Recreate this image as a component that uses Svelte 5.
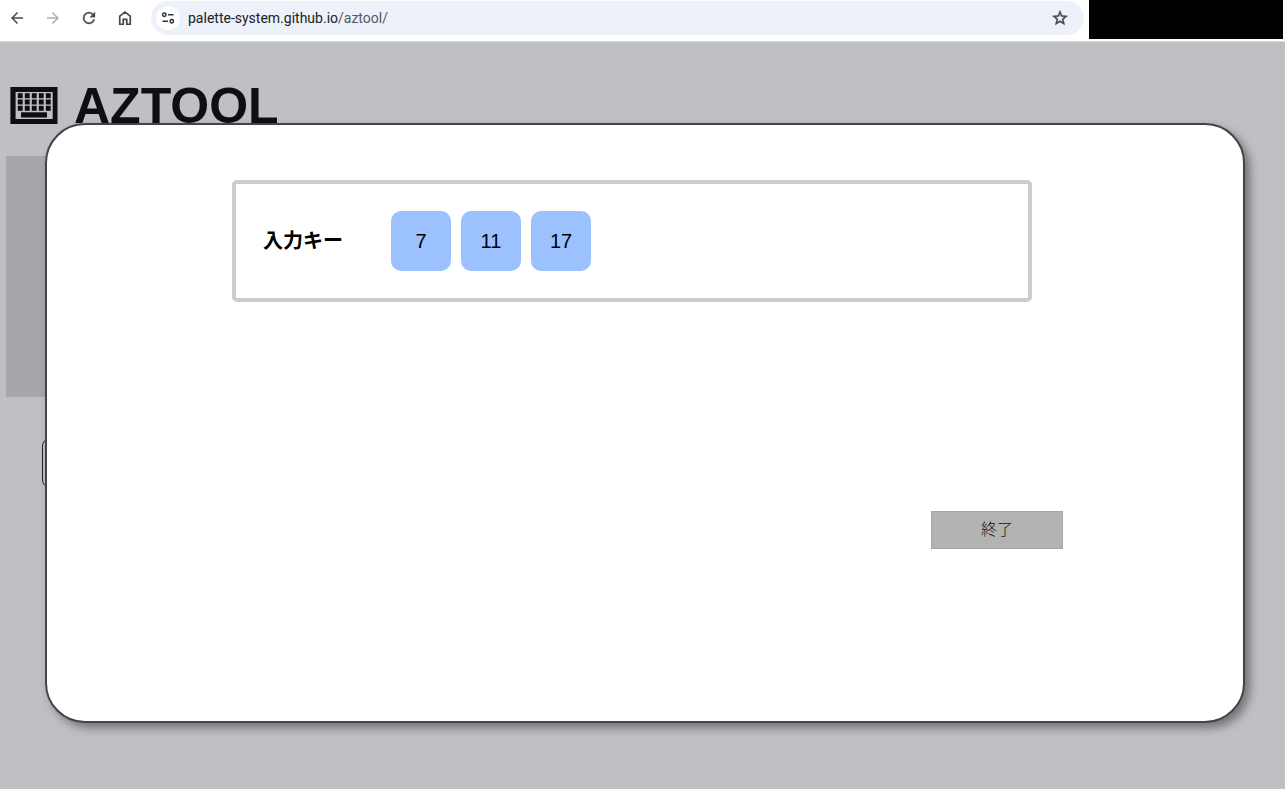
<script>
  const keys = [7, 11, 17];
  const keyColumns = [7.8, 14.8, 21.8, 28.8, 35.8];
  const keyRows = [6.2, 12.5, 18.8];
</script>

<div class="window">
  <header class="toolbar">
    <nav class="nav" aria-label="Browser">
      <button aria-label="Back">
        <svg width="18" height="18" viewBox="0 0 24 24" fill="#46484a"><path d="M20 11H7.830l5.590-5.590L12 4l-8 8 8 8 1.410-1.410L7.830 13H20v-2z" /></svg>
      </button>
      <button aria-label="Forward" disabled>
        <svg width="18" height="18" viewBox="0 0 24 24" fill="#adafb1"><path d="M12 4l-1.410 1.410L16.170 11H4v2h12.170l-5.580 5.590L12 20l8-8z" /></svg>
      </button>
      <button aria-label="Reload">
        <svg width="18" height="18" viewBox="0 0 24 24" fill="#46484a" stroke="#46484a" stroke-width="0.4"><path d="M17.650 6.350A7.960 7.960 0 0 0 12 4a8 8 0 1 0 7.730 10h-2.080A6 6 0 1 1 12 6c1.660 0 3.140.690 4.220 1.780L13 11h7V4l-2.350 2.350z" /></svg>
      </button>
      <button aria-label="Home">
        <svg width="18" height="18" viewBox="0 0 18 18" fill="none" stroke="#46484a" stroke-width="1.7"><path d="M3.750 7.100 9 3.100l5.250 4v8.150h-3.500v-4.900h-3.500v4.900h-3.500z" /></svg>
      </button>
    </nav>
    <div class="address">
      <button class="site" aria-label="Site information">
        <svg width="16" height="16" viewBox="0 0 16 16" fill="none" stroke="#303336" stroke-width="1.500"><circle cx="4.300" cy="4.700" r="1.700" /><path d="M8 4.700h5.500M2.500 11.300H8" /><circle cx="11.800" cy="11.300" r="1.700" /></svg>
      </button>
      <span class="url">palette-system.github.io<span class="path">/aztool/</span></span>
      <button class="star" aria-label="Bookmark">
        <svg width="18" height="18" viewBox="0 0 24 24" fill="#46484a" stroke="#46484a" stroke-width="0.700"><path d="M22 9.240l-7.190-.620L12 2 9.190 8.630 2 9.240l5.460 4.730L5.820 21 12 17.270 18.180 21l-1.630-7.030L22 9.240zM12 15.400l-3.760 2.270 1-4.280-3.320-2.880 4.380-.380L12 6.100l1.710 4.040 4.380.380-3.320 2.880 1 4.280L12 15.400z" /></svg>
      </button>
    </div>
    <div class="mask"></div>
  </header>

  <main class="page">
    <h1>
      <svg width="48" height="38" viewBox="0 0 48 38" aria-hidden="true">
        <path fill="#0d0f14" fill-rule="evenodd" d="M.4 0h47.100v37H.4zM5.600 5v27h37.100V5z" />
        <g fill="#0d0f14">
          {#each keyRows as y}
            {#each keyColumns as x}
              <rect {x} {y} width="4.900" height="5" />
            {/each}
          {/each}
          <rect x="11" y="25.300" width="26" height="5.200" />
        </g>
      </svg>
      <span>AZTOOL</span>
    </h1>
    <div class="panel"></div>
    <div class="frame"></div>

    <div class="modal" role="dialog" aria-label="入力キー">
      <section class="inputs">
        <h2>入力キー</h2>
        <ul>
          {#each keys as key}
            <li>{key}</li>
          {/each}
        </ul>
      </section>
      <div class="actions">
        <button class="finish">終了</button>
      </div>
    </div>
  </main>
</div>

<style>
  :global(body) {
    margin: 0;
  }

  .window {
    display: flex;
    flex-direction: column;
    min-height: 100vh;
    font-family: "Liberation Sans", "Noto Sans CJK JP", sans-serif;
    color: #000;
  }

  button {
    display: flex;
    align-items: center;
    justify-content: center;
    padding: 0;
    border: 0;
    background: none;
  }

  .toolbar {
    display: flex;
    align-items: flex-start;
    height: 42px;
    border-bottom: 1px solid #d8d9dc;
    background: #fff;
    box-sizing: border-box;
    padding-right: 2px;
  }

  .nav {
    display: flex;
    gap: 8px;
    padding: 4px 12px 0 3px;
  }

  .nav button {
    width: 28px;
    height: 28px;
  }

  .address {
    display: flex;
    flex: 1;
    align-items: center;
    height: 34px;
    margin-top: 1px;
    padding: 0 15px 0 5px;
    border-radius: 17px;
    background: #ecf1fa;
    box-sizing: border-box;
  }

  .site {
    width: 24px;
    height: 24px;
    border-radius: 12px;
    background: #fff;
  }

  .url {
    flex: 1;
    margin-left: 8px;
    font: 14px/20px Roboto, "Open Sans", sans-serif;
    color: #202124;
  }

  .path {
    color: #55585c;
  }

  .mask {
    width: 194px;
    height: 39px;
    margin-left: 5px;
    background: #000;
  }

  .page {
    position: relative;
    flex: 1;
    background: #bfc0c4;
    padding: 34px 6px 0;
  }

  h1 {
    display: flex;
    align-items: center;
    gap: 16px;
    margin: 0;
    padding: 0 4px;
    font-size: 50px;
    line-height: 60px;
    color: #0d0f14;
  }

  .panel {
    height: 241px;
    margin: 20px 60px 0 0;
    background: #a6a7aa;
  }

  .frame {
    height: 50px;
    margin: 41px 60px 0 36px;
    border: 1px solid #22242a;
    border-radius: 8px;
    box-sizing: border-box;
  }

  .modal {
    position: absolute;
    inset: 81px 40px 66px 45px;
    display: flex;
    flex-direction: column;
    align-items: center;
    padding: 55px 26px 24px 0;
    border: 2px solid #444;
    border-radius: 40px;
    background: #fff;
    box-shadow: 5px 5px 10px rgba(0, 0, 0, 0.4);
    box-sizing: border-box;
  }

  .inputs {
    display: flex;
    align-items: center;
    width: 100%;
    max-width: 800px;
    padding: 27px;
    border: 4px solid #ccc;
    border-radius: 5px;
    box-sizing: border-box;
  }

  h2 {
    width: 128px;
    margin: 0;
    font-size: 20px;
    line-height: 24px;
  }

  ul {
    display: flex;
    gap: 10px;
    margin: 0;
    padding: 0;
    list-style: none;
  }

  li {
    width: 60px;
    border-radius: 10px;
    background: #9bc2ff;
    font-size: 20px;
    line-height: 60px;
    text-align: center;
  }

  .actions {
    display: flex;
    justify-content: flex-end;
    width: 100%;
    max-width: 862px;
    margin-top: 209px;
  }

  .finish {
    width: 132px;
    height: 38px;
    padding-bottom: 4px;
    border: 1px solid #a6a6a6;
    background: #b3b3b3;
    font: 300 16px/24px "Noto Sans CJK JP", sans-serif;
    color: #111;
  }
</style>
